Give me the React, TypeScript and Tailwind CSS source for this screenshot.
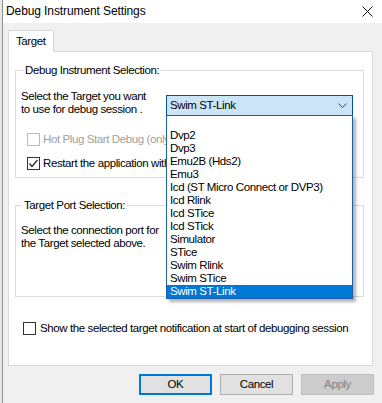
const items = [
  "",
  "Dvp2",
  "Dvp3",
  "Emu2B (Hds2)",
  "Emu3",
  "Icd (ST Micro Connect or DVP3)",
  "Icd Rlink",
  "Icd STice",
  "Icd STick",
  "Simulator",
  "STice",
  "Swim Rlink",
  "Swim STice",
  "Swim ST-Link",
];

const CheckBox = ({ checked, disabled }: { checked?: boolean; disabled?: boolean }) => (
  <span
    className={
      "flex h-[13px] w-[13px] shrink-0 items-center justify-center border bg-white " +
      (disabled ? "border-[#bcbcbc]" : "border-[#333333]")
    }
  >
    {checked && (
      <svg width="11" height="11" viewBox="0 0 11 11">
        <path d="M1.5 5.5 L4 8.5 L9.5 2" fill="none" stroke="#222" strokeWidth="1.2" />
      </svg>
    )}
  </span>
);

export default function App() {
  return (
    <div className="flex h-[403px] w-[382px] overflow-hidden bg-white font-['Liberation_Sans',Arial,sans-serif] text-[11.5px] leading-[13px] tracking-[-0.4px] text-black">
      <div className="w-[2px] shrink-0 bg-[#e8e8e8]" />
      <div className="flex w-[380px] flex-col border-l border-[#8f8f8f]">
        {/* title bar */}
        <div className="flex h-[23px] shrink-0 items-center justify-between bg-white pl-[3px] pr-[9px]">
          <span className="text-[12px] tracking-[-0.1px]">Debug Instrument Settings</span>
          <svg width="11" height="11" viewBox="0 0 11 11">
            <path d="M0.5 0.5 L10.5 10.5 M10.5 0.5 L0.5 10.5" stroke="#111" strokeWidth="1" />
          </svg>
        </div>

        <div className="flex flex-1 flex-col bg-[#f0f0f0] pl-[5px] pt-[7px]">
          {/* tab */}
          <div className="relative z-10 -mb-px flex h-[22px] w-[46px] items-center border border-b-0 border-[#d9d9d9] bg-white pl-[7px]">
            Target
          </div>

          {/* tab panel */}
          <div className="flex h-[315px] w-[365px] flex-col border border-[#d9d9d9] bg-white pt-[11px]">
            {/* group 1 */}
            <fieldset className="relative ml-[6px] h-[115px] w-[349px] border border-[#dcdcdc]">
              <legend className="ml-[7px] px-[2px] leading-[14px]">Debug Instrument Selection:</legend>
              <div className="flex flex-col pl-[5px] pt-[13px]">
                <div className="flex items-start">
                  <div className="w-[145px]">
                    <div>Select the Target you want</div>
                    <div>to use for debug session .</div>
                  </div>
                  <div className="relative z-20 mt-[5px]">
                    <div className="flex h-[21px] w-[187px] items-center justify-between border border-[#005499] bg-[#cce4f7] pl-[3px] pr-[5px]">
                      <span>Swim ST-Link</span>
                      <svg width="9" height="6" viewBox="0 0 9 6">
                        <path d="M0.5 0.5 L4.5 4.5 L8.5 0.5" fill="none" stroke="#444" strokeWidth="1" />
                      </svg>
                    </div>
                    <div className="absolute left-0 top-[20px] w-[187px] border border-[#1c5fa8] bg-white shadow-[3px_3px_3px_rgba(0,0,0,0.3)]">
                      {items.map((it, i) => (
                        <div
                          key={i}
                          className={
                            "h-[13px] whitespace-nowrap pl-[3px] leading-[13px] " +
                            (i === items.length - 1 ? "bg-[#0078d7] text-white" : "")
                          }
                        >
                          {it}
                        </div>
                      ))}
                    </div>
                  </div>
                </div>
                <div className="ml-[6px] mt-[17px] flex items-center gap-[3px] whitespace-nowrap text-[#a0a0a0]">
                  <CheckBox disabled />
                  <span>Hot Plug Start Debug (only for SWIM)</span>
                </div>
                <div className="ml-[6px] mt-[11px] flex items-center gap-[3px] whitespace-nowrap">
                  <CheckBox checked />
                  <span>Restart the application with Swim Reset</span>
                </div>
              </div>
            </fieldset>

            {/* group 2 */}
            <fieldset className="ml-[6px] mt-[20px] h-[99px] w-[349px] border border-[#dcdcdc]">
              <legend className="ml-[6px] px-[2px] leading-[14px]">Target Port Selection:</legend>
              <div className="pl-[5px] pt-[12px]">
                <div>Select the connection port for</div>
                <div>the Target selected above.</div>
              </div>
            </fieldset>

            <div className="ml-[14px] mt-[25px] flex items-center gap-[4px] whitespace-nowrap">
              <CheckBox />
              <span>Show the selected target notification at start of debugging session</span>
            </div>
          </div>

          {/* buttons */}
          <div className="mt-[8px] flex gap-[8px] pl-[131px]">
            <button className="h-[21px] w-[73px] border-2 border-[#0078d7] bg-[#e1e1e1]">OK</button>
            <button className="h-[21px] w-[73px] border border-[#adadad] bg-[#e1e1e1]">Cancel</button>
            <button className="h-[21px] w-[73px] border border-[#bfbfbf] bg-[#cccccc] text-[#838383]">Apply</button>
          </div>
        </div>
      </div>
    </div>
  );
}
